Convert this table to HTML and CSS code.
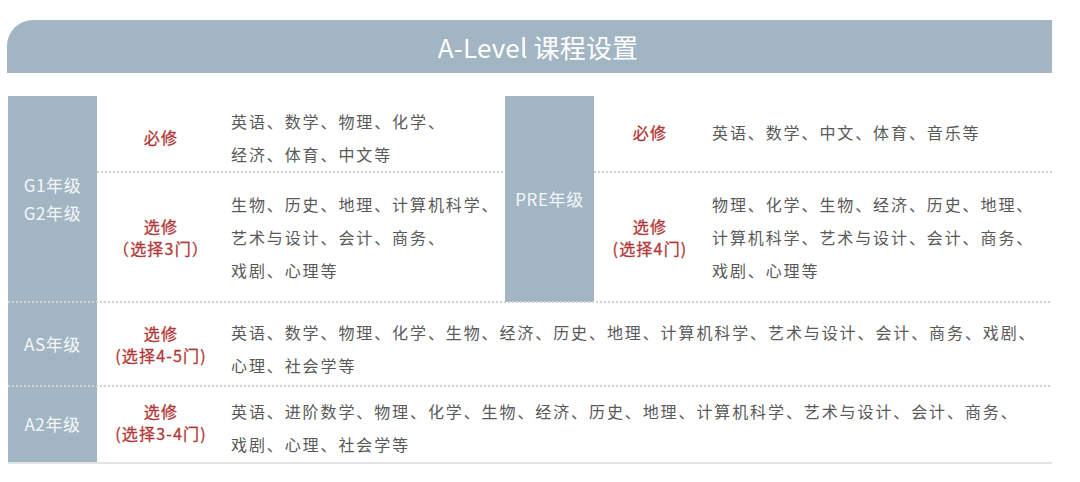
FILE: index.html
```html
<!DOCTYPE html>
<html lang="zh-CN">
<head>
<meta charset="utf-8">
<title>A-Level 课程设置</title>
<link rel="stylesheet" href="styles.css">
</head>
<body>
<div class="page">
  <div class="header">A-Level 课程设置</div>
  <div class="table">
    <div class="row row-g">
      <div class="grade">G1年级<br>G2年级</div>
      <div class="part part-left">
        <div class="sub sub-1">
          <div class="label">必修</div>
          <div class="content content-shift">英语、数学、物理、化学、<br>经济、体育、中文等</div>
        </div>
        <div class="sub sub-2 dotted">
          <div class="label">选修<br>（选择3门）</div>
          <div class="content">生物、历史、地理、计算机科学、<br>艺术与设计、会计、商务、<br>戏剧、心理等</div>
        </div>
      </div>
      <div class="grade">PRE年级</div>
      <div class="part part-right">
        <div class="sub sub-1">
          <div class="label">必修</div>
          <div class="content">英语、数学、中文、体育、音乐等</div>
        </div>
        <div class="sub sub-2 dotted">
          <div class="label">选修<br>(选择4门)</div>
          <div class="content">物理、化学、生物、经济、历史、地理、<br>计算机科学、艺术与设计、会计、商务、<br>戏剧、心理等</div>
        </div>
      </div>
    </div>
    <div class="row row-as dotted">
      <div class="grade">AS年级</div>
      <div class="label">选修<br>(选择4-5门)</div>
      <div class="content content-shift2">英语、数学、物理、化学、生物、经济、历史、地理、计算机科学、艺术与设计、会计、商务、戏剧、<br>心理、社会学等</div>
    </div>
    <div class="row row-a2 dotted">
      <div class="grade">A2年级</div>
      <div class="label">选修<br>(选择3-4门)</div>
      <div class="content content-shift">英语、进阶数学、物理、化学、生物、经济、历史、地理、计算机科学、艺术与设计、会计、商务、<br>戏剧、心理、社会学等</div>
    </div>
  </div>
</div>
</body>
</html>
```

FILE: styles.css
```css
* { box-sizing: border-box; }

html, body {
  margin: 0;
  padding: 0;
  background: #ffffff;
}

body {
  font-family: "Noto Sans CJK SC", "Noto Sans", sans-serif;
  width: 1080px;
  height: 482px;
  overflow: hidden;
}

.page {
  padding: 20px 0 0 7px;
  width: 1052px;
}

.header {
  height: 53px;
  background: #a2b5c3;
  border-top-left-radius: 26px;
  color: #ffffff;
  font-size: 26px;
  letter-spacing: 0.2px;
  display: flex;
  align-items: center;
  justify-content: center;
  padding-left: 17px;
}

.table {
  margin-top: 23px;
  margin-left: 1px;
  border-bottom: 2px solid #e3e3e3;
}

.row {
  display: grid;
}

.row-g {
  grid-template-columns: 89px 408px 89px 1fr;
  height: 206px;
}

.row-as {
  grid-template-columns: 89px 128px 1fr;
  height: 84px;
  align-items: center;
}

.row-a2 {
  grid-template-columns: 89px 128px 1fr;
  height: 76px;
  align-items: center;
}

.grade {
  background: #a2b5c3;
  color: #f4f7f9;
  font-size: 17px;
  letter-spacing: 0.6px;
  line-height: 28px;
  display: flex;
  align-items: center;
  justify-content: center;
  text-align: center;
  align-self: stretch;
}

.part {
  display: grid;
  grid-template-rows: 76px 130px;
}

.sub {
  display: grid;
  align-items: center;
}

.part-left .sub {
  grid-template-columns: 128px 1fr;
}

.part-right .sub {
  grid-template-columns: 112px 1fr;
}

.label {
  color: #b03838;
  font-size: 16px;
  font-weight: 400;
  letter-spacing: 1.2px;
  line-height: 22px;
  text-align: center;
  -webkit-text-stroke: 0.3px #b03838;
}

.content {
  color: #595959;
  font-size: 16px;
  letter-spacing: 1.9px;
  line-height: 33px;
  padding-left: 6px;
  white-space: nowrap;
}

.part-left .sub-1 .label {
  padding-top: 6px;
}

.content-shift {
  padding-top: 7px;
}

.content-shift2 {
  padding-top: 10px;
}

.part-right .sub-1 .label,
.part-right .sub-1 .content {
  padding-bottom: 4px;
}

.row-a2 .label {
  padding-bottom: 4px;
}

.dotted {
  position: relative;
}

.dotted::before {
  content: "";
  position: absolute;
  top: -1px;
  left: 0;
  right: 0;
  height: 2px;
  background-image: repeating-linear-gradient(to right, #d2d2d2 0 2px, transparent 2px 4px);
}
```
